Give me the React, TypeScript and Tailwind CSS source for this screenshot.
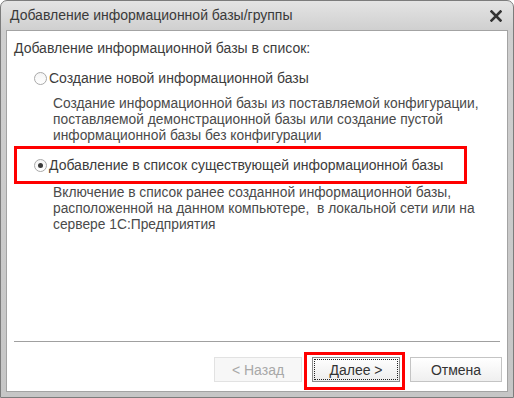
import React from "react";

function Radio({ checked }: { checked?: boolean }) {
  return (
    <span className="w-[13px] h-[13px] rounded-full border border-[#a9a9a9] bg-[linear-gradient(#f4f4f4,#ffffff)] flex items-center justify-center shrink-0">
      {checked && <span className="w-[5px] h-[5px] rounded-full bg-[#3a3a3a]" />}
    </span>
  );
}

export default function App() {
  return (
    <div
      className="w-[514px] h-[398px] rounded-t-[7px] border border-[#7c7c7c] bg-[linear-gradient(#e4e4e4,#cfcfcf_30px,#c6c6c6)] flex flex-col text-[#3c3c3c]"
      style={{ fontFamily: '"Liberation Sans", Arial, sans-serif' }}
    >
      <div className="h-[29px] shrink-0 flex items-center justify-between pl-[9px] pr-[11px]">
        <span className="text-[14px] text-[#3a3a3a]">Добавление информационной базы/группы</span>
        <svg width="12" height="12" viewBox="0 0 12 12">
          <path d="M1.5 1.5 L10.5 10.5 M10.5 1.5 L1.5 10.5" stroke="#333" strokeWidth="2.6" strokeLinecap="square" />
        </svg>
      </div>
      <div className="flex-1 mx-[5px] mb-[5px] bg-white border border-[#a3a3a3] flex flex-col text-[14px] leading-[16px]">
        <div className="mt-[9px] ml-[7px]">Добавление информационной базы в список:</div>
        <div className="mt-[14px] ml-[27px] flex items-center gap-[2px]">
          <Radio />
          <span>Создание новой информационной базы</span>
        </div>
        <div className="mt-[10px] ml-[46px] text-[#4a4a4a] text-[13.8px]">
          <div>Создание информационной базы из поставляемой конфигурации,</div>
          <div>поставляемой демонстрационной базы или создание пустой</div>
          <div>информационной базы без конфигурации</div>
        </div>
        <div className="mt-[2px] ml-[7px] w-[453px] h-[38px] border-[3px] border-[#ff0000] flex items-center pl-[17px] gap-[2px]">
          <Radio checked />
          <span>Добавление в список существующей информационной базы</span>
        </div>
        <div className="mt-[1px] ml-[46px] text-[#4a4a4a] text-[13.8px]">
          <div>Включение в список ранее созданной информационной базы,</div>
          <div>расположенной на данном компьютере,&nbsp; в локальной сети или на</div>
          <div>сервере 1С:Предприятия</div>
        </div>
        <div className="flex-1" />
        <div className="mx-[7px] h-px bg-[#a0a0a0]" />
        <div className="h-[49px] flex items-start justify-end pr-[5px] pt-[10px]">
          <div className="mt-[5px] w-[88px] h-[25px] border border-[#e2e2e2] bg-[#f7f7f7] flex items-center justify-center text-[#a8a8a8]">
            &lt; Назад
          </div>
          <div className="ml-[2px] border-[3px] border-[#ff0000] pl-[5px] pt-[2px] pr-[2px] pb-[5px]">
            <div className="w-[88px] h-[25px] border border-[#8c8c8c] bg-[linear-gradient(#ffffff,#ececec)] p-[1px]">
              <div className="w-full h-full border border-dotted border-[#222] flex items-center justify-center text-[#333]">
                Далее &gt;
              </div>
            </div>
          </div>
          <div className="ml-[5px] mt-[5px] w-[92px] h-[25px] border border-[#c4c4c4] bg-[linear-gradient(#ffffff,#efefef)] flex items-center justify-center text-[#333]">
            Отмена
          </div>
        </div>
      </div>
    </div>
  );
}
